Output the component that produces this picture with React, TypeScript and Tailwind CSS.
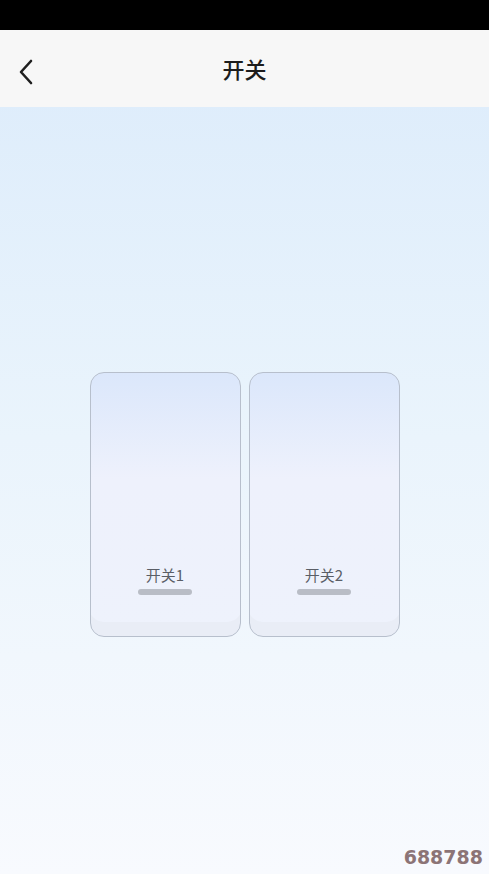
export default function App() {
  const switches = ["开关1", "开关2"];
  return (
    <div
      className="relative flex h-[874px] w-[489px] flex-col overflow-hidden bg-gradient-to-b from-[#dbebfb] via-[#eaf4fc] to-[#f8fafe]"
      style={{ fontFamily: '"Noto Sans CJK SC", "Noto Sans", sans-serif' }}
    >
      <div className="h-[30px] shrink-0 bg-black" />
      <div className="relative flex h-[77px] shrink-0 items-center justify-center bg-[#f7f7f7]">
        <button type="button" className="absolute left-[14px] top-[25px] p-1">
          <svg width="16" height="26" viewBox="0 0 16 26" fill="none">
            <path d="M13 2 L3 13 L13 24" stroke="#1f1f1f" strokeWidth="2.6" strokeLinecap="round" strokeLinejoin="round" />
          </svg>
        </button>
        <h1 className="text-[22px] font-medium text-[#1c1c1c]">开关</h1>
      </div>

      <div className="flex flex-1 justify-center pt-[265px]">
        <div className="flex gap-2">
          {switches.map((name) => (
            <div
              key={name}
              className="flex h-[265px] w-[151px] flex-col items-center justify-end rounded-[14px] border border-[#b7bfcc] bg-gradient-to-b from-[#dbe7fb] via-[#eef1fc] via-40% to-[#eef2fc] pb-[41px] shadow-[inset_0_-16px_0_-2px_#e9edf6]"
            >
              <span className="text-[15px] leading-none text-[#5a5e66]">{name}</span>
              <div className="mt-[7px] h-[6px] w-[54px] rounded-full bg-[#b9bdc6]" />
            </div>
          ))}
        </div>
      </div>

      <span
        className="absolute bottom-[3px] right-[6px] text-[19px] font-bold text-[#8c7476]"
        style={{ fontFamily: '"DejaVu Sans", sans-serif' }}
      >
        688788
      </span>
    </div>
  );
}
